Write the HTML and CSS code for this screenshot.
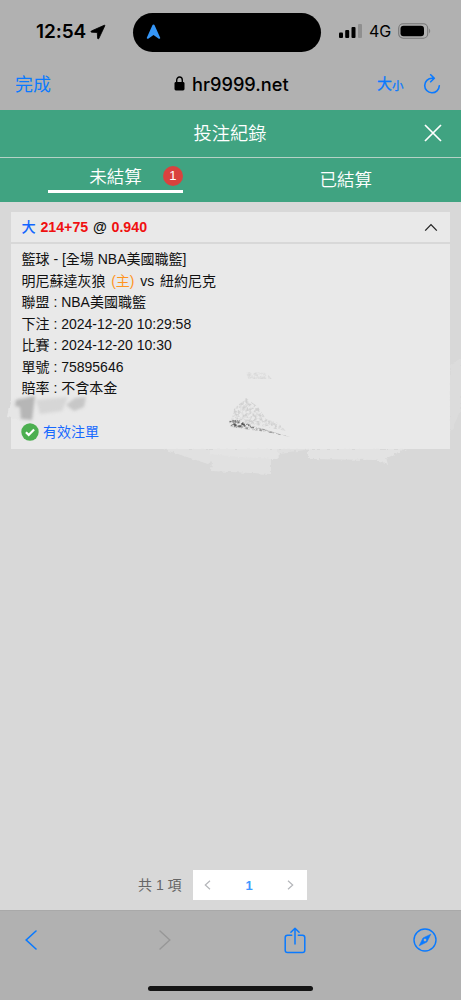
FILE: index.html
```html
<!DOCTYPE html>
<html lang="zh-Hant">
<head>
<meta charset="utf-8">
<meta name="viewport" content="width=device-width, initial-scale=1">
<title>投注紀錄</title>
<link rel="stylesheet" href="styles.css">
</head>
<body>
<div class="phone">
  <div class="status">
    <div class="clock"><span class="time">12:54</span>
      <svg class="loc" width="16" height="16" viewBox="0 0 16 16"><path d="M14.2 1.3 1.3 7q-1 .8.3 1.2l5.7.3.3 5.8q.4 1.3 1.2.3l6-12.8q.3-1-.6-.5z" stroke="#000" stroke-width=".8" stroke-linejoin="round"/></svg>
    </div>
    <div class="island"><svg width="15" height="16" viewBox="0 0 15 16"><path d="M7.5.5q.8 0 1.1.8l5.6 12.4q.2 1.5-1.4 1l-5.3-3.6-5.3 3.6q-1.6.5-1.4-1L6.4 1.3q.3-.8 1.1-.8z" fill="#3596f7"/></svg></div>
    <div class="signal">
      <svg width="25" height="16" viewBox="0 0 25 16"><rect x="1" y="9.5" width="4" height="5.5" rx="1"/><rect x="7.2" y="7" width="4" height="8" rx="1"/><rect x="13.5" y="4" width="4" height="11" rx="1"/><rect x="20" y="1" width="4" height="14" rx="1" fill="#8f8f8f"/></svg>
      <span class="net">4G</span>
      <svg class="battery" width="34" height="16" viewBox="0 0 34 16"><rect x=".7" y=".8" width="29" height="14.4" rx="4.5" fill="none" stroke="#777" stroke-width="1.1"/><rect x="2.5" y="2.7" width="23.5" height="10.6" rx="3"/><path d="M31.2 5.5q2 2.5 0 5z" fill="#777"/></svg>
    </div>
  </div>
  <div class="urlbar">
    <span class="done">完成</span>
    <div class="address">
      <svg width="11" height="15" viewBox="0 0 11 15"><rect x=".5" y="6" width="10" height="8.5" rx="1.4"/><path d="M2.7 7V4.1a2.8 3.1 0 0 1 5.6 0V7" fill="none" stroke="#000" stroke-width="1.4"/></svg>
      <span>hr9999.net</span>
    </div>
    <div class="tools"><span class="big">大</span><span class="small">小</span>
      <svg width="18" height="21" viewBox="0 0 18 21"><path d="M10.5 4.2H9A7.3 7.3 0 1 0 16.3 11.8M7.7.8l3.6 3.5-3.6 3.5" fill="none" stroke="#0a7aff" stroke-width="1.6" stroke-linecap="round" stroke-linejoin="round"/></svg>
    </div>
  </div>

  <header class="title"><span>投注紀錄</span>
    <svg class="close" width="18" height="18" viewBox="0 0 18 18"><path d="M1 1 17 17M17 1 1 17" stroke="#fff" stroke-width="1.7"/></svg>
  </header>
  <nav class="tabs">
    <div class="tab"><div class="active"><span>未結算</span><b class="badge">1</b></div></div>
    <div class="tab"><span class="settled">已結算</span></div>
  </nav>

  <main class="content">
    <section class="card">
      <div class="cardhead">
        <div><span class="pick">大</span> <span class="odds">214+75</span> @ <span class="odds">0.940</span></div>
        <svg width="14" height="9" viewBox="0 0 14 9"><path d="M1.2 7.6 7 1.6l5.8 6" fill="none" stroke="#222" stroke-width="1.3"/></svg>
      </div>
      <div class="details">
        <div>籃球 - [全場 NBA美國職籃]</div>
        <div class="teams">明尼蘇達灰狼 <span class="home">(主)</span> vs 紐約尼克</div>
        <div>聯盟 : NBA美國職籃</div>
        <div>下注 : 2024-12-20 10:29:58</div>
        <div>比賽 : 2024-12-20 10:30</div>
        <div>單號 : 75895646</div>
        <div>賠率 : 不含本金</div>
      </div>
      <div class="valid">
        <svg width="18" height="18" viewBox="0 0 18 18"><circle cx="9" cy="9" r="8.7" fill="#4caf50"/><path d="m4.9 9.2 2.8 2.7 5.4-5.5" fill="none" stroke="#fff" stroke-width="2.2"/></svg>
        <span>有效注單</span>
      </div>
      <svg class="smudge" width="461" height="110" viewBox="0 380 461 110">
        <defs>
          <filter id="rough" x="-5%" y="-10%" width="110%" height="120%"><feTurbulence type="fractalNoise" baseFrequency=".25" numOctaves="2" seed="4"/><feDisplacementMap in="SourceGraphic" scale="4" xChannelSelector="R" yChannelSelector="G"/><feGaussianBlur stdDeviation=".6"/></filter>
          <filter id="grain" x="-5%" y="-10%" width="110%" height="120%"><feTurbulence type="fractalNoise" baseFrequency=".35" numOctaves="3" seed="8"/><feColorMatrix values="0 0 0 0 0 0 0 0 0 0 0 0 0 0 0 3 0 0 0 -1.1" result="n"/><feComposite in="SourceGraphic" in2="n" operator="in"/><feGaussianBlur stdDeviation=".7"/></filter>
          <filter id="soft" x="-10%" y="-20%" width="120%" height="140%"><feGaussianBlur stdDeviation="1.6"/></filter>
        </defs>
        <g filter="url(#rough)" fill="#e6e6e6">
          <path d="M10 402 22 396 22 420 7 417z"/>
          <path d="M163 449h115v10h-7v15l-60-3 1-10-4 3z" opacity=".7"/>
          <path d="M210 449h105l-36 4v6l-38-2-31-3z" opacity=".6"/>
          <path d="M308 449h98l-17 8h-3l2 8-12-5-68-1z" opacity=".8"/>
          <path d="M450 365 461 358v52l-11 23z" opacity=".35"/>
        </g>
        <g filter="url(#soft)">
          <path d="m16 400 19-4-3 24-11-1-1-12-5-1z" fill="#a0a0a0" opacity=".7"/>
          <path d="m36 400 32-3-6 14-22 3z" fill="#cacaca" opacity=".6"/>
          <path d="m66 405 9-7 11-1-2 10-10 4z" fill="#b6b6b6" opacity=".65"/>
        </g>
        <g filter="url(#grain)">
          <path d="m234 409 12-11 12 9 8 12 12 4 8 8-55-11z" fill="#999" opacity=".3"/>
          <path d="m229 421 9-1 16 6 36 11-24-5-35-5z" fill="#666" opacity=".6"/>
          <path d="m229 421 9-1 9 4 8 4-24-2z" fill="#444" opacity=".8"/>
          <path d="m246 372 20 1 6 6-24 0z" fill="#aaa" opacity=".25"/>
        </g>
      </svg>
    </section>
    <div class="pager"><span class="total">共 1 項</span>
      <div class="pages">
        <svg width="7" height="10" viewBox="0 0 7 10"><path d="M6 .8 1.3 5 6 9.2" fill="none" stroke="#b4b6ba" stroke-width="1.2"/></svg>
        <b>1</b>
        <svg width="7" height="10" viewBox="0 0 7 10"><path d="M1 .8 5.7 5 1 9.2" fill="none" stroke="#b4b6ba" stroke-width="1.2"/></svg>
      </div>
    </div>
  </main>

  <footer class="bottom">
    <div class="actions">
      <svg width="12" height="20" viewBox="0 0 12 20"><path d="M11 1 1.2 10l9.8 9" fill="none" stroke="#0a7aff" stroke-width="1.6" stroke-linecap="round"/></svg>
      <svg class="forward" width="12" height="20" viewBox="0 0 12 20"><path d="m1 1 9.8 9L1 19" fill="none" stroke="#979797" stroke-width="1.4" stroke-linecap="round"/></svg>
      <svg width="22" height="27" viewBox="0 0 22 27"><path d="M7.7 8.2H3.5Q1.2 8.2 1.2 10.5v12.7q0 2.3 2.3 2.3h15q2.3 0 2.3-2.3V10.5q0-2.3-2.3-2.3h-4.2M11 17V1.2M6.9 5.2 11 1.2l4.1 4" fill="none" stroke="#0a7aff" stroke-width="1.5" stroke-linecap="round" stroke-linejoin="round"/></svg>
      <svg width="24" height="24" viewBox="0 0 24 24"><circle cx="12" cy="12" r="11" fill="none" stroke="#0a7aff" stroke-width="1.4"/><path fill-rule="evenodd" d="M17.8 6.2 13.9 14 6.2 17.8 10 10zM12 10.3a1.7 1.7 0 1 0 0 3.4 1.7 1.7 0 0 0 0-3.4z" fill="#0a7aff" stroke="#0a7aff" stroke-width=".6" stroke-linejoin="round"/></svg>
    </div>
    <div class="homebar"></div>
  </footer>
</div>
</body>
</html>
```
FILE: styles.css
```css
* { box-sizing: border-box; }
body { margin: 0; background: #d8d8d8; font-family: "Liberation Sans", "Noto Sans CJK TC", sans-serif; color: #111; }
svg { display: block; flex: none; }
.phone { width: 461px; height: 1000px; display: flex; flex-direction: column; overflow: hidden; }
.status { height: 62px; background: #b1b1b1; display: grid; grid-template-columns: 133px 188px 1fr; align-items: center; color: #000; flex: none; }
.clock { display: flex; align-items: center; gap: 4px; padding: 1px 0 0 36px; }
.time { font: 600 19px/24px Inter, sans-serif; letter-spacing: -.1px; width: 50px; white-space: nowrap; }
.island { height: 39px; margin-top: 2px; border-radius: 20px; background: #000; display: flex; align-items: center; padding-left: 13px; }
.signal { display: flex; align-items: center; padding: 0 0 0 17px; }
.net { font: 400 16px/20px Inter, sans-serif; margin-left: 6px; width: 22px; }
.battery { margin-left: 7px; }
.urlbar { height: 48px; background: #b1b1b1; display: grid; grid-template-columns: 174px 203px 1fr; align-items: center; padding-bottom: 4px; flex: none; }
.done { color: #0a7aff; font-size: 18px; line-height: 24px; padding: 0 0 2px 15px; font-family: "Noto Sans CJK TC", sans-serif; }
.address { display: flex; align-items: center; gap: 7px; padding-bottom: 1px; font: 500 18.2px/24px Inter, sans-serif; color: #000; }
.address span { white-space: nowrap; }
.tools { display: flex; align-items: center; color: #0a7aff; font: 400 15px/22px "Noto Sans CJK TC", sans-serif; -webkit-text-stroke: .3px #0a7aff; }
.tools .small { font-size: 11.5px; padding-top: 1px; }
.tools .big { padding-bottom: 2px; }
.tools svg { margin-left: 19px; -webkit-text-stroke: 0; }
.title { height: 47px; background: #40a381; color: #fff; display: grid; grid-template-columns: 424px 1fr; align-items: center; font-size: 18.3px; font-weight: 350; flex: none; }
.title span { text-align: center; padding: 0 0 3px 36px; }
.close { margin-bottom: 1px; }
.tabs { height: 45px; border-top: 1px solid #b5d2c6; background: #40a381; display: grid; grid-template-columns: 1fr 1fr; color: #fff; font-size: 17.5px; font-weight: 350; flex: none; }
.tab { display: flex; justify-content: center; align-items: center; }
.active { width: 135px; height: 35px; margin-top: -10px; border-bottom: 3px solid #fff; display: flex; align-items: center; justify-content: flex-end; gap: 21px; padding-top: 5px; }
.active span { padding-bottom: 1px; }
.settled { padding-bottom: 3px; }
.badge { width: 20px; height: 20px; border-radius: 50%; background: #d9423e; font: 400 13px/20px "Liberation Sans", sans-serif; text-align: center; }
.content { height: 708px; display: flex; flex-direction: column; justify-content: space-between; padding: 10px 11px 10px; flex: none; }
.card { height: 237px; background: #e9e9e9; position: relative; }
.cardhead { height: 32px; border-bottom: 2px solid #d8d8d8; padding: 0 12px 0 10.5px; display: flex; justify-content: space-between; align-items: center; font: 700 14.2px/20px "Liberation Sans", "Noto Sans CJK TC", sans-serif; word-spacing: .8px; }
.pick { color: #1266ff; font-weight: 500; }
.odds { color: #f01010; }
.details { padding: 5px 11px 0 10.5px; font-size: 14px; line-height: 21.5px; white-space: nowrap; }
.teams { word-spacing: 1.8px; }
.home { color: #ff941f; }
.valid { display: flex; align-items: center; gap: 4px; padding: 21px 0 0 10px; color: #1769ff; font-size: 14px; line-height: 22px; }
.smudge { position: absolute; left: -11px; top: 168px; pointer-events: none; overflow: visible; }
.pager { height: 30px; display: flex; align-items: center; padding-left: 127px; color: #666; font-size: 14px; }
.total { width: 55px; padding-bottom: 3px; white-space: nowrap; }
.pages { width: 114px; height: 30px; background: #fff; display: flex; align-items: center; justify-content: space-between; padding: 0 13px 0 11px; color: #4098ff; font-size: 13px; }
.bottom { height: 90px; background: #b1b1b1; border-top: 1px solid #a9a9a9; flex: none; }
.actions { height: 58px; display: grid; grid-template-columns: 134px 125px 129px 1fr; align-items: center; padding-left: 25px; }
.homebar { width: 165px; height: 5px; border-radius: 3px; background: #151515; margin: 17px auto 0; }
```
